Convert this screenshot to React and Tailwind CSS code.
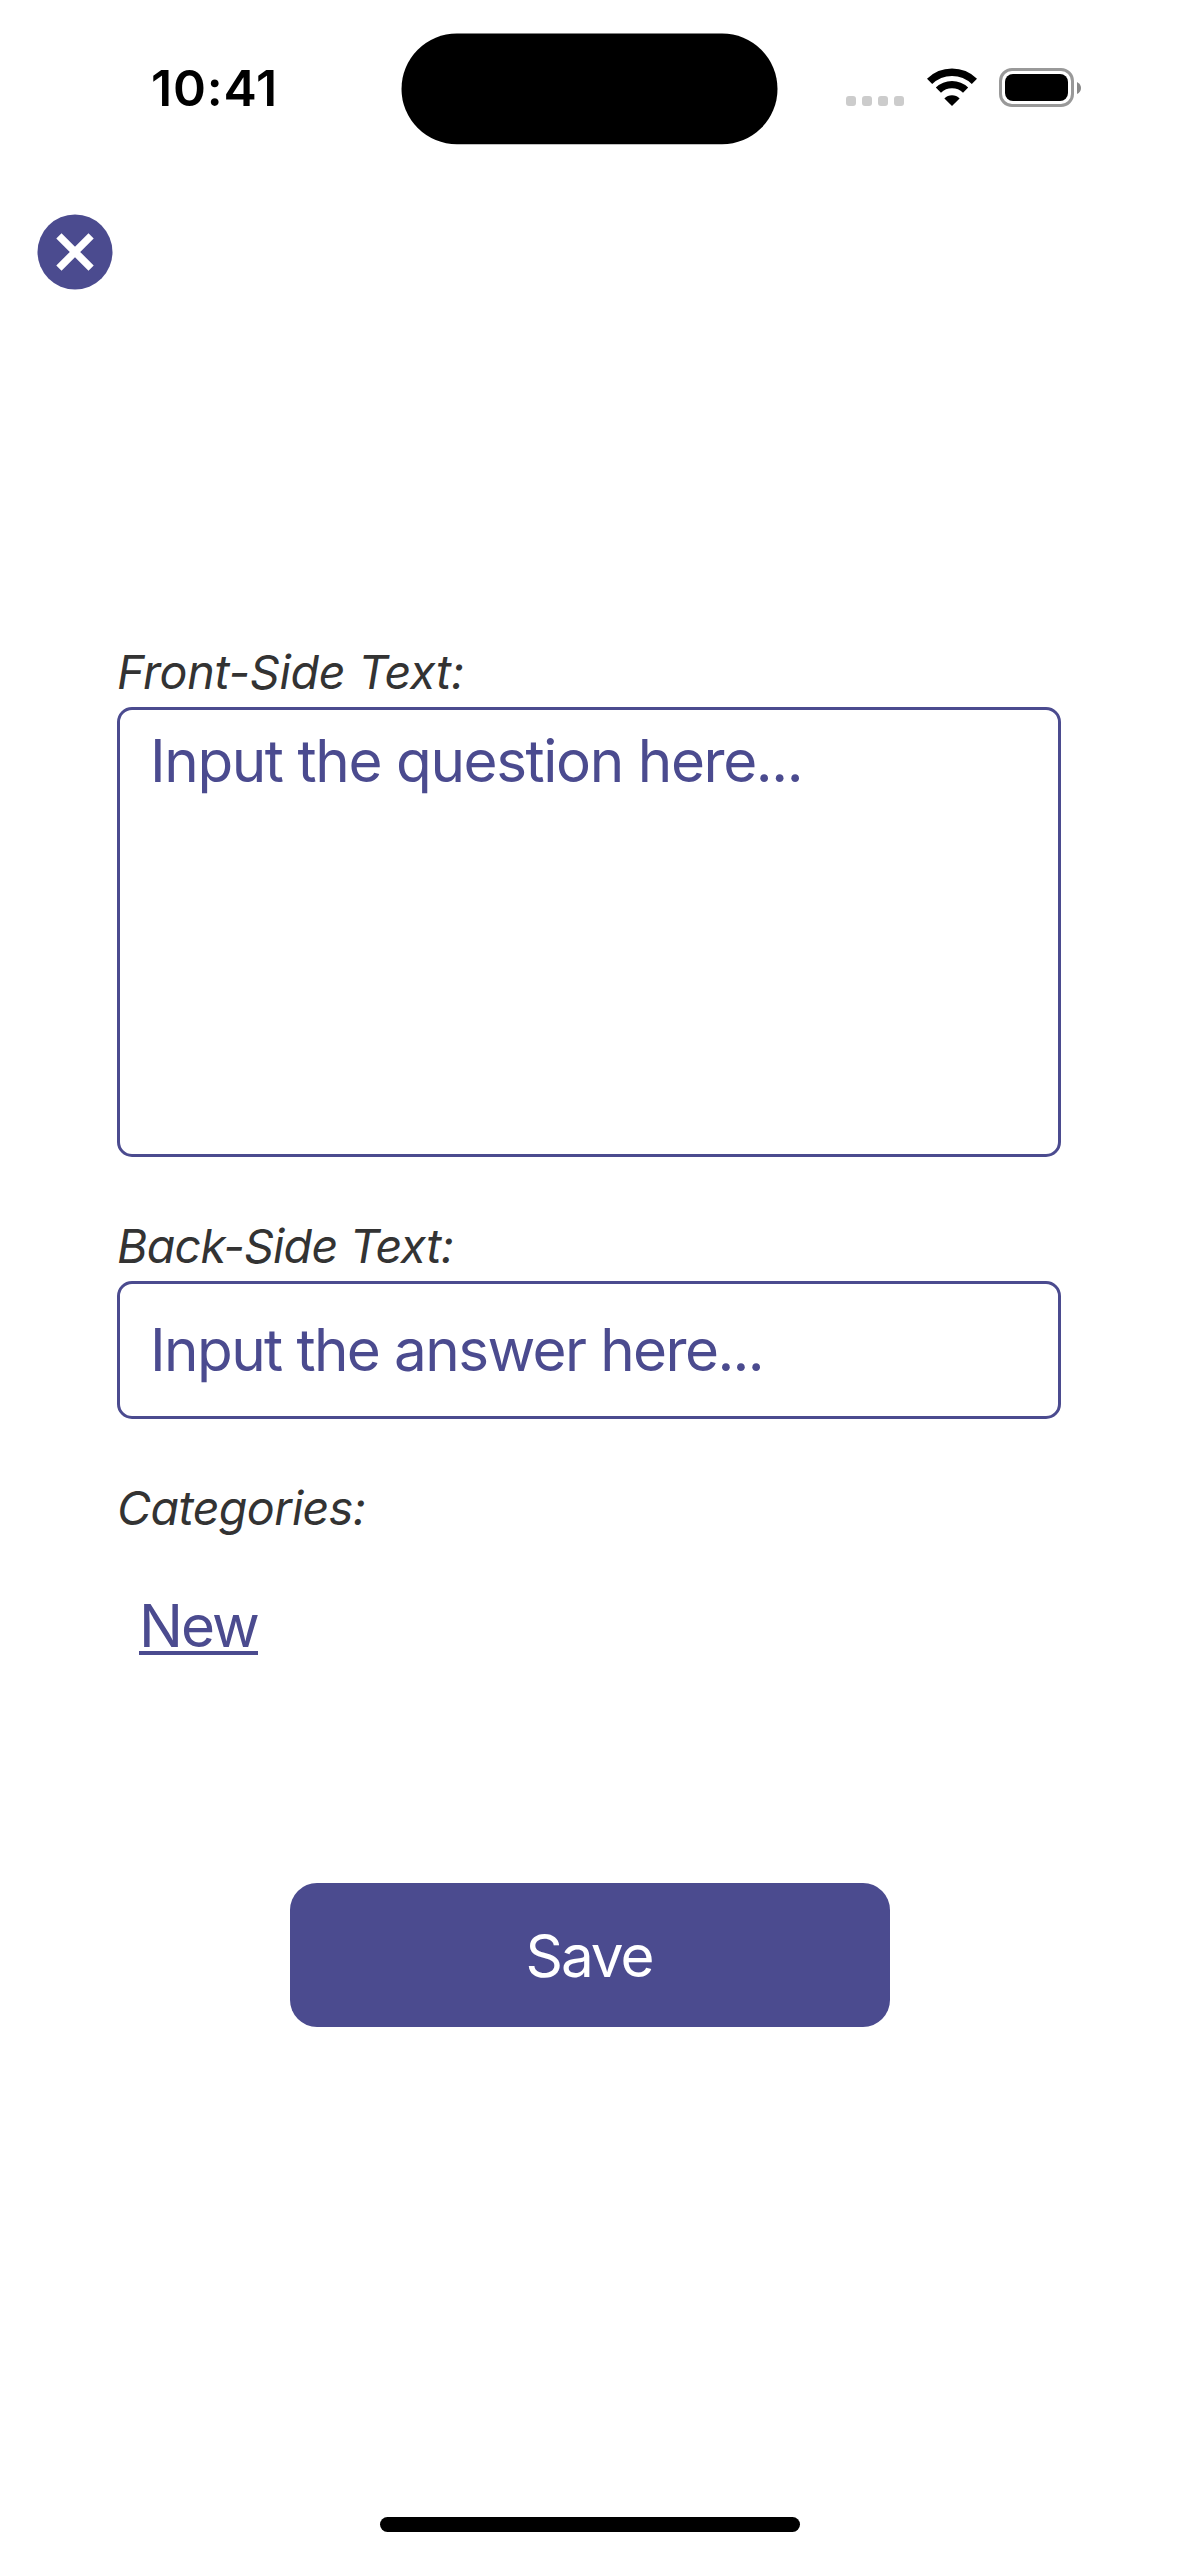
function WifiIcon() {
  return (
    <svg className="block h-[38px] w-[52px]" viewBox="0 0 52 38" fill="none">
      <path d="M3.6 13.4A32 32 0 0 1 48.4 13.4" stroke="#000" strokeWidth="7.4" />
      <path d="M12.4 22.2A19.5 19.5 0 0 1 39.6 22.2" stroke="#000" strokeWidth="7.4" />
      <path d="M26 38L18.4 30.4A10.8 10.8 0 0 1 33.6 30.4Z" fill="#000" />
    </svg>
  );
}

function BatteryIcon() {
  return (
    <div className="flex items-center gap-[3px]">
      <div className="h-[39px] w-[75px] rounded-[13px] border-[3px] border-[#999999] p-[3px]">
        <div className="h-full w-full rounded-[8px] bg-black" />
      </div>
      <svg className="block h-[12px] w-[4px]" viewBox="0 0 4 12">
        <path d="M0 0Q4 2 4 6Q4 10 0 12Z" fill="#888888" />
      </svg>
    </div>
  );
}

function StatusBar() {
  return (
    <header className="flex h-[177px] items-start">
      <div className="w-[401px] pt-[58px] pl-[151px] text-[50px] leading-[60px] font-semibold tracking-[0.8px] text-black">
        10:41
      </div>
      <svg className="mt-[33px] block h-[112px] w-[377px]" viewBox="0 0 377 112">
        <rect x="0.5" y="0.5" width="376" height="110.8" rx="55.4" />
      </svg>
      <div className="mt-[68px] ml-[68px] flex h-[39px]">
        <div className="mt-[28px] flex h-[10px] gap-[6px]">
          <span className="size-[10px] rounded-[3px] bg-[#cccccc]" />
          <span className="size-[10px] rounded-[3px] bg-[#cccccc]" />
          <span className="size-[10px] rounded-[3px] bg-[#cccccc]" />
          <span className="size-[10px] rounded-[3px] bg-[#cccccc]" />
        </div>
        <div className="ml-[22px]">
          <WifiIcon />
        </div>
        <div className="ml-[21px]">
          <BatteryIcon />
        </div>
      </div>
    </header>
  );
}

export default function App() {
  return (
    <div className="flex h-[2556px] w-[1179px] flex-col overflow-hidden bg-white font-['Inter',sans-serif] text-[#4b4b8f]">
      <StatusBar />

      <button className="mt-[37px] ml-[37px] size-[76px] shrink-0">
        <svg className="block size-[76px]" viewBox="0 0 76 76">
          <circle cx="38" cy="38" r="37.5" fill="#4b4b8f" />
          <path d="M21.9 21.9L54.1 54.1M54.1 21.9L21.9 54.1" stroke="#fff" strokeWidth="7.4" />
        </svg>
      </button>

      <main className="mt-[352px] ml-[117px] flex w-[944px] flex-col">
        <div className="h-[60px] text-[46.6px] leading-[60px] tracking-[-0.25px] whitespace-nowrap text-[#333333] italic">
          Front-Side Text:
        </div>
        <div className="mt-[5px] h-[450px] rounded-[15px] border-[3px] border-[#4b4b8f] pt-[15px] pl-[30px] text-[58.4px] leading-[72px] tracking-[-1.4px] whitespace-nowrap">
          Input the question here...
        </div>

        <div className="mt-[59px] h-[60px] text-[46.6px] leading-[60px] tracking-[-0.75px] whitespace-nowrap text-[#333333] italic">
          Back-Side Text:
        </div>
        <div className="mt-[5px] flex h-[138px] items-center rounded-[15px] border-[3px] border-[#4b4b8f] pl-[30px] text-[58.4px] leading-[72px] tracking-[-1.6px] whitespace-nowrap">
          Input the answer here...
        </div>

        <div className="mt-[59px] h-[60px] text-[46.6px] leading-[60px] tracking-[-0.6px] whitespace-nowrap text-[#333333] italic">
          Categories:
        </div>
        <a className="mt-[42px] ml-[22px] h-[75px] w-[119px] border-b-[4px] border-[#4b4b8f] pt-[10px] text-[58.4px] leading-[72px] tracking-[-2px]">
          New
        </a>

        <button className="mt-[228px] ml-[173px] flex h-[144px] w-[600px] items-center justify-center rounded-[27px] bg-[#4b4b8f] pt-[2px] pr-[2px] text-[58.4px] leading-[72px] tracking-[-2px] text-white">
          Save
        </button>
      </main>

      <div className="mt-[490px] ml-[380px] h-[15px] w-[420px] shrink-0 rounded-full bg-black" />
    </div>
  );
}
